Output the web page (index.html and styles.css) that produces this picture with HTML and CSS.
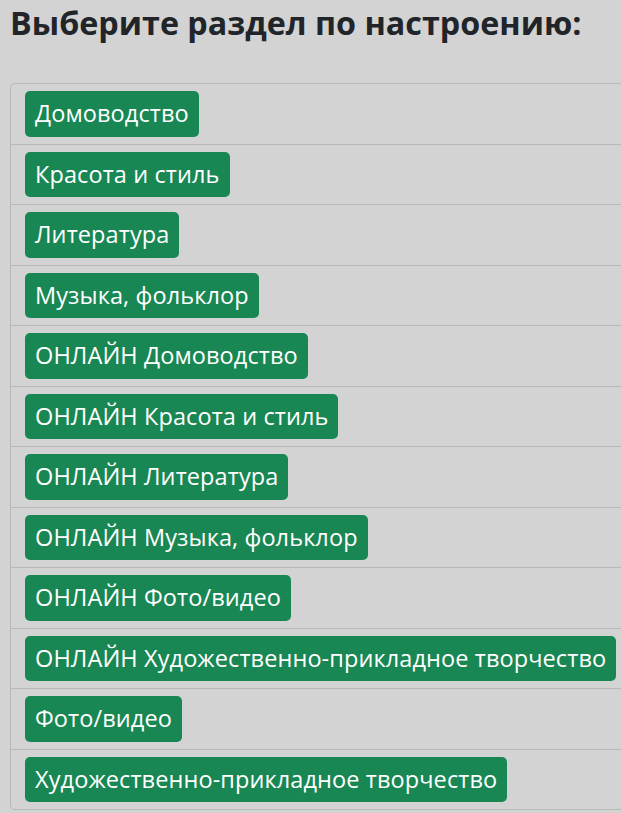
FILE: index.html
```html
<!DOCTYPE html>
<html lang="ru">
<head>
<meta charset="utf-8">
<title>Разделы</title>
<link rel="stylesheet" href="styles.css">
</head>
<body>
<div class="page">
  <h2 class="title">Выберите раздел по настроению:</h2>
  <ul class="list">
    <li class="item"><a class="btn">Домоводство</a></li>
    <li class="item"><a class="btn">Красота и стиль</a></li>
    <li class="item"><a class="btn">Литература</a></li>
    <li class="item"><a class="btn">Музыка, фольклор</a></li>
    <li class="item"><a class="btn">ОНЛАЙН Домоводство</a></li>
    <li class="item"><a class="btn">ОНЛАЙН Красота и стиль</a></li>
    <li class="item"><a class="btn">ОНЛАЙН Литература</a></li>
    <li class="item"><a class="btn">ОНЛАЙН Музыка, фольклор</a></li>
    <li class="item"><a class="btn">ОНЛАЙН Фото/видео</a></li>
    <li class="item"><a class="btn">ОНЛАЙН Художественно-прикладное творчество</a></li>
    <li class="item"><a class="btn">Фото/видео</a></li>
    <li class="item"><a class="btn">Художественно-прикладное творчество</a></li>
  </ul>
</div>
</body>
</html>
```
FILE: styles.css
```css
html, body {
  margin: 0;
  padding: 0;
  background: #d3d3d3;
}
body {
  font-family: "Open Sans", "Noto Sans", sans-serif;
  color: #212529;
  overflow: hidden;
}
.page {
  padding: 0 10px;
}
.title {
  margin: 0;
  padding-top: 2px;
  font-size: 32.3px;
  font-weight: 700;
  line-height: 40px;
  height: 81px;
  white-space: nowrap;
}
.list {
  list-style: none;
  margin: 0;
  padding: 0;
  width: 612px;
  border: 1px solid rgba(0,0,0,.125);
  border-radius: 5px;
}
.item {
  padding: 7px 14px;
  border-top: 1px solid rgba(0,0,0,.125);
  display: flex;
}
.item:first-child {
  border-top: 0;
}
.btn {
  display: inline-block;
  background: #198754;
  color: #fff;
  font-size: 23.5px;
  letter-spacing: 0.1px;
  line-height: 45.5px;
  height: 45.5px;
  padding: 0 10px;
  border-radius: 5px;
  white-space: nowrap;
}
```
